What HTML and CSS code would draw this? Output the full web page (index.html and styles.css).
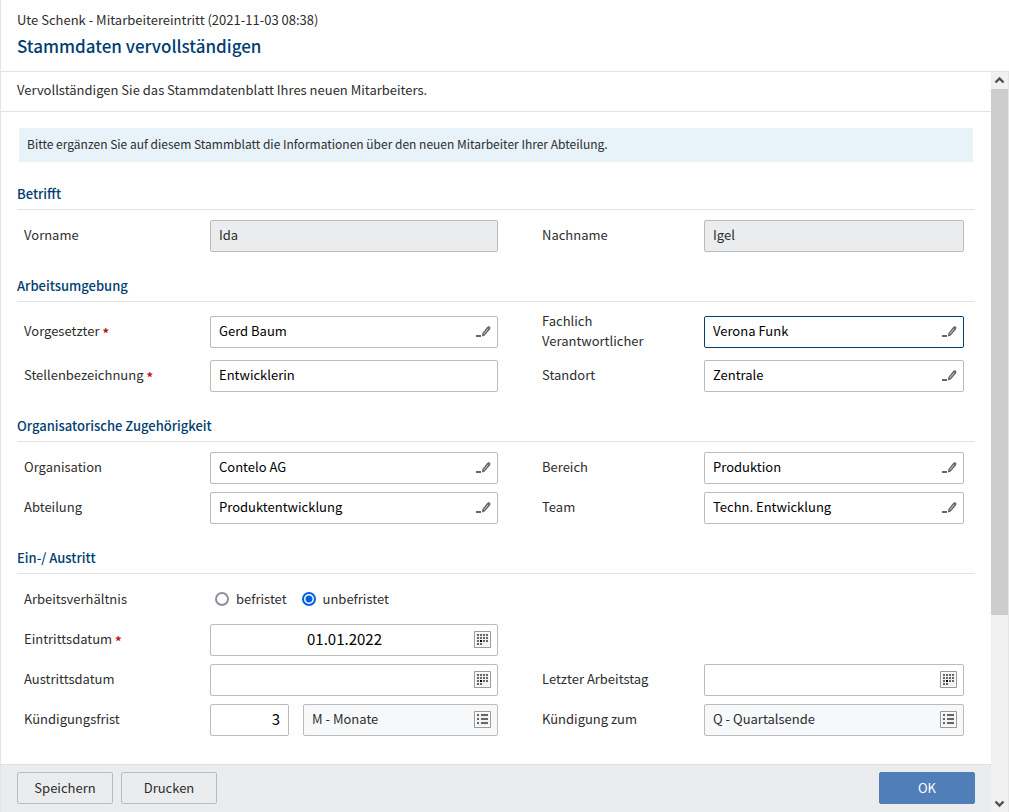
FILE: index.html
```html
<!DOCTYPE html>
<html lang="de">
<head>
<meta charset="utf-8">
<title>Stammdaten vervollständigen</title>
<link rel="stylesheet" href="styles.css">
</head>
<body>
<svg class="sprite" aria-hidden="true">
  <symbol id="pencil" viewBox="0 0 16 14">
    <path d="M1 10h5v2H1z" fill="#666"/>
    <path d="M7 11.6L7.3 8.2L12 2.2Q13.4 .6 14.8 1.6Q16 2.8 15 4.2L9.8 10.6Z" fill="#666"/>
    <path d="M8.8 9L13.2 3.6" stroke="#ccc" stroke-width="1" fill="none"/>
  </symbol>
  <symbol id="calendar" viewBox="0 0 17 17">
    <path d="M.5 .5h16v16H.5z" fill="#f2f2f2" stroke="#999"/>
    <path d="M1.5 1.5h14v14h-14z" fill="none" stroke="#fff"/>
    <path d="M3 3h2v2H3zM6 3h2v2H6zM9 3h2v2H9zM12 3h2v2h-2zM3 6h2v2H3zM6 6h2v2H6zM9 6h2v2H9zM12 6h2v2h-2zM3 9h2v2H3zM9 9h2v2H9zM12 9h2v2h-2zM3 12h2v2H3zM6 12h2v2H6z" fill="#666"/>
    <path d="M6 9h2v2H6z" fill="#000"/>
  </symbol>
  <symbol id="list" viewBox="0 0 17 17">
    <path d="M.5 .5h16v16H.5z" fill="#f2f2f2" stroke="#999"/>
    <path d="M1.5 1.5h14v14h-14z" fill="none" stroke="#fff"/>
    <path d="M3 3h2v2H3zM7 3h7v2H7zM3 7h2v2H3zM7 7h7v2H7zM3 11h2v2H3zM7 11h7v2H7z" fill="#666"/>
  </symbol>
</svg>
<div class="dialog">
  <header class="header">
    <p class="subtitle">Ute Schenk - Mitarbeitereintritt (2021-11-03 08:38)</p>
    <h1 class="title">Stammdaten vervollständigen</h1>
  </header>
  <div class="content">
    <form class="pane">
      <p class="intro">Vervollständigen Sie das Stammdatenblatt Ihres neuen Mitarbeiters.</p>
      <div class="form">
        <p class="notice">Bitte ergänzen Sie auf diesem Stammblatt die Informationen über den neuen Mitarbeiter Ihrer Abteilung.</p>

        <section>
          <h2 class="heading">Betrifft</h2>
          <div class="row">
            <label class="label" for="vorname">Vorname</label>
            <div class="field readonly"><input id="vorname" class="input" value="Ida" readonly></div>
            <label class="label second" for="nachname">Nachname</label>
            <div class="field readonly"><input id="nachname" class="input" value="Igel" readonly></div>
          </div>
        </section>

        <section>
          <h2 class="heading">Arbeitsumgebung</h2>
          <div class="row">
            <label class="label" for="vorgesetzter">Vorgesetzter <span class="required">*</span></label>
            <div class="field"><input id="vorgesetzter" class="input" value="Gerd Baum"><button class="trigger" type="button" aria-label="Vorgesetzter wählen"><svg class="pencil"><use href="#pencil"/></svg></button></div>
            <label class="label second" for="fachlich">Fachlich Verantwortlicher</label>
            <div class="field active"><input id="fachlich" class="input" value="Verona Funk"><button class="trigger" type="button" aria-label="Verantwortlichen wählen"><svg class="pencil"><use href="#pencil"/></svg></button></div>
          </div>
          <div class="row">
            <label class="label" for="stelle">Stellenbezeichnung <span class="required">*</span></label>
            <div class="field"><input id="stelle" class="input" value="Entwicklerin"></div>
            <label class="label second" for="standort">Standort</label>
            <div class="field"><input id="standort" class="input" value="Zentrale"><button class="trigger" type="button" aria-label="Standort wählen"><svg class="pencil"><use href="#pencil"/></svg></button></div>
          </div>
        </section>

        <section>
          <h2 class="heading">Organisatorische Zugehörigkeit</h2>
          <div class="row">
            <label class="label" for="organisation">Organisation</label>
            <div class="field"><input id="organisation" class="input" value="Contelo AG"><button class="trigger" type="button" aria-label="Organisation wählen"><svg class="pencil"><use href="#pencil"/></svg></button></div>
            <label class="label second" for="bereich">Bereich</label>
            <div class="field"><input id="bereich" class="input" value="Produktion"><button class="trigger" type="button" aria-label="Bereich wählen"><svg class="pencil"><use href="#pencil"/></svg></button></div>
          </div>
          <div class="row">
            <label class="label" for="abteilung">Abteilung</label>
            <div class="field"><input id="abteilung" class="input" value="Produktentwicklung"><button class="trigger" type="button" aria-label="Abteilung wählen"><svg class="pencil"><use href="#pencil"/></svg></button></div>
            <label class="label second" for="team">Team</label>
            <div class="field"><input id="team" class="input" value="Techn. Entwicklung"><button class="trigger" type="button" aria-label="Team wählen"><svg class="pencil"><use href="#pencil"/></svg></button></div>
          </div>
        </section>

        <section>
          <h2 class="heading">Ein-/ Austritt</h2>
          <div class="row" role="radiogroup" aria-labelledby="verhaeltnis">
            <span class="label" id="verhaeltnis">Arbeitsverhältnis</span>
            <div class="radios">
              <label class="option"><input class="radio" type="radio" name="art">befristet</label>
              <label class="option"><input class="radio" type="radio" name="art" checked>unbefristet</label>
            </div>
          </div>
          <div class="row">
            <label class="label" for="eintritt">Eintrittsdatum <span class="required">*</span></label>
            <div class="field"><input id="eintritt" class="input date" value="01.01.2022"><button class="trigger" type="button" aria-label="Eintrittsdatum wählen"><svg class="box"><use href="#calendar"/></svg></button></div>
          </div>
          <div class="row">
            <label class="label" for="austritt">Austrittsdatum</label>
            <div class="field"><input id="austritt" class="input date"><button class="trigger" type="button" aria-label="Austrittsdatum wählen"><svg class="box"><use href="#calendar"/></svg></button></div>
            <label class="label second" for="letzter">Letzter Arbeitstag</label>
            <div class="field"><input id="letzter" class="input date"><button class="trigger" type="button" aria-label="Letzten Arbeitstag wählen"><svg class="box"><use href="#calendar"/></svg></button></div>
          </div>
          <div class="row">
            <label class="label" for="frist">Kündigungsfrist</label>
            <div class="pair">
              <div class="field amount"><input id="frist" class="input number" value="3"></div>
              <div class="field choice"><select class="input select" aria-label="Einheit der Kündigungsfrist"><option>M - Monate</option></select><svg class="box marker"><use href="#list"/></svg></div>
            </div>
            <label class="label second" for="zum">Kündigung zum</label>
            <div class="field choice"><select id="zum" class="input select"><option>Q - Quartalsende</option></select><svg class="box marker"><use href="#list"/></svg></div>
          </div>
        </section>
      </div>
      <footer class="footer">
        <button class="button" type="button">Speichern</button>
        <button class="button" type="button">Drucken</button>
        <button class="button primary" type="submit">OK</button>
      </footer>
    </form>
    <div class="scrollbar" aria-hidden="true">
      <svg class="arrow" viewBox="0 0 17 17"><path d="M4.5 10.5L8.5 6.5L12.5 10.5" fill="none" stroke="#505050" stroke-width="2.4"/></svg>
      <div class="track"><div class="thumb"></div></div>
      <svg class="arrow" viewBox="0 0 17 17"><path d="M4.5 6.5L8.5 10.5L12.5 6.5" fill="none" stroke="#505050" stroke-width="2.4"/></svg>
    </div>
  </div>
</div>
</body>
</html>
```
FILE: styles.css
```css
* {
  box-sizing: border-box;
}

body {
  margin: 0;
  background: #fff;
  color: #2d2d2d;
  font: 13px/20px "Noto Sans CJK SC", "Noto Sans", sans-serif;
}

h1, h2, p {
  margin: 0;
}

input, select, button {
  font: inherit;
  color: inherit;
}

.sprite {
  display: none;
}

.dialog {
  display: flex;
  flex-direction: column;
  height: 100vh;
  border-left: 1px solid #e4e4e4;
}

.header {
  padding: 10px 16px 13px;
  border-bottom: 1px solid #e4e4e4;
}

.title {
  padding-top: 4px;
  color: #003e73;
  font-size: 17px;
  font-weight: 500;
  line-height: 24px;
}

.content {
  display: flex;
  flex: 1;
  min-height: 0;
}

.pane {
  display: flex;
  flex-direction: column;
  flex: 1;
  min-width: 0;
}

.intro {
  padding: 8px 16px 11px;
  border-bottom: 1px solid #e4e4e4;
}

.form {
  flex: 1;
  min-height: 0;
  overflow: hidden;
  padding: 16px 16px 0;
}

.notice {
  margin: 0 2px 2px;
  padding: 6px 8px 8px;
  background: #e7f2f9;
  font-size: 12px;
}

.heading {
  margin-bottom: 6px;
  padding: 20px 0 5px;
  border-bottom: 1px solid #e4e4e4;
  color: #003e73;
  font-size: 13px;
  font-weight: 500;
}

.row {
  display: grid;
  grid-template-columns: 193px 288fr 206px 260fr;
  align-items: center;
  min-height: 40px;
  padding: 4px 11px 4px 0;
}

.label {
  margin-top: -2px;
  padding-left: 7px;
}

.row:has(.active) {
  height: 48px;
}

.second {
  padding: 0 50px 0 44px;
}

.required {
  color: #b81414;
  font-weight: 700;
  line-height: 1;
  vertical-align: -2px;
}

.field {
  position: relative;
  display: flex;
  align-items: center;
  min-width: 0;
  height: 32px;
  border: 1px solid #bbb;
  border-radius: 2px;
  background: #fff;
  color: #000;
}

.readonly {
  background: #ebecee;
  color: #2d2d2d;
}

.active {
  border-color: #003e73;
}

.choice {
  flex: 1;
  background: #f7f8fa;
  color: #2d2d2d;
}

.input {
  flex: 1;
  width: 100%;
  min-width: 0;
  height: 30px;
  padding: 0 8px 3px;
  border: 0;
  outline: 0;
  background: transparent;
  appearance: none;
}

.select {
  padding-bottom: 2px;
}

.date {
  padding: 0 0 3px 10px;
  font-size: 15px;
  text-align: center;
}

.number {
  font-size: 15px;
  text-align: right;
}

.trigger {
  display: flex;
  padding: 0 6px 1px;
  border: 0;
  background: transparent;
}

.pencil {
  width: 16px;
  height: 14px;
}

.box {
  width: 17px;
  height: 17px;
}

.marker {
  position: absolute;
  top: 6px;
  right: 6px;
  pointer-events: none;
}

.pair {
  display: flex;
  gap: 14px;
  min-width: 0;
}

.amount {
  width: 79px;
}

.radios {
  display: flex;
  gap: 15px;
  padding: 0 0 2px 5px;
}

.option {
  display: flex;
  align-items: center;
  gap: 7px;
}

.radio {
  width: 14px;
  height: 14px;
  margin: 0;
  border: 2px solid #8f8f9d;
  border-radius: 50%;
  appearance: none;
}

.radio:checked {
  border-color: #0060df;
  background: radial-gradient(circle, #0060df 3px, #fff 4px);
}

.footer {
  display: flex;
  gap: 8px;
  padding: 7px 16px 8px;
  border-top: 1px solid #e0e0e0;
  background: #ebecee;
}

.button {
  width: 96px;
  height: 32px;
  padding: 0;
  border: 1px solid #bbb;
  border-radius: 2px;
  background: #ebecee;
}

.primary {
  margin-left: auto;
  border-color: #4f7eb8;
  background: #4f7eb8;
  color: #fff;
}

.scrollbar {
  display: flex;
  flex-direction: column;
  width: 18px;
  border-right: 1px solid #e4e4e4;
  background: #f0f0f0;
}

.arrow {
  width: 17px;
  height: 17px;
}

.track {
  flex: 1;
}

.thumb {
  height: 74.5%;
  background: #cdcdcd;
}
```
